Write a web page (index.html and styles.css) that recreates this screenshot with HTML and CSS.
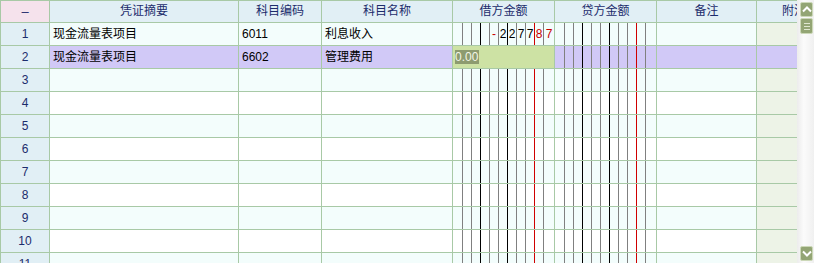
FILE: index.html
```html
<!DOCTYPE html>
<html lang="zh-CN">
<head>
  <meta charset="UTF-8">
  <title>凭证录入</title>
  <link rel="stylesheet" href="styles.css">
</head>
<body>
  <div class="window">
    <div class="grid-view">
      <div class="grid" id="grid">
        <div class="hd hd-corner">–</div>
        <div class="hd">凭证摘要</div>
        <div class="hd">科目编码</div>
        <div class="hd">科目名称</div>
        <div class="hd">借方金额</div>
        <div class="hd">贷方金额</div>
        <div class="hd">备注</div>
        <div class="hd hd-left">附注</div>
        <!-- 凭证分录行由脚本生成 -->
      </div>
    </div>

    <div class="scrollbar">
      <div class="sb-btn">
        <svg width="10" height="7" viewBox="0 0 10 7"><path d="M1 5.5 L5 1.5 L9 5.5" fill="none" stroke="#fff" stroke-width="2"/></svg>
      </div>
      <div class="sb-thumb"><span></span><span></span><span></span></div>
      <div class="sb-track"></div>
      <div class="sb-btn">
        <svg width="10" height="7" viewBox="0 0 10 7"><path d="M1 1.5 L5 5.5 L9 1.5" fill="none" stroke="#fff" stroke-width="2"/></svg>
      </div>
    </div>
  </div>

  <script>
    // 分录数据
    const entries = [
      { summary: '现金流量表项目', code: '6011', name: '利息收入', debit: '-227787' },
      { summary: '现金流量表项目', code: '6602', name: '管理费用', editing: true }
    ];

    // 金额栏：11 个数位格，千位黑线，元角分之间红线
    function amountCell(value) {
      const chars = (value || '').padStart(11, ' ').split('');
      let html = '<div class="cell amt">';
      chars.forEach((ch, i) => {
        let cls = '';
        if (i === 3 || i === 6) cls = 'thousand';
        if (i === 9) cls = 'point';
        if (i >= 9 || ch === '-') cls += ' red';
        html += `<i class="${cls}">${ch.trim()}</i>`;
      });
      return html + '</div>';
    }

    function buildRows() {
      const grid = document.getElementById('grid');
      let html = '';
      for (let n = 1; n <= 12; n++) {
        const e = entries[n - 1] || {};
        let rowClass = n % 2 ? 'row odd' : 'row even';
        if (e.editing) rowClass = 'row selected';

        html += `
          <div class="${rowClass}">
            <div class="cell num">${n}</div>
            <div class="cell">${e.summary || ''}</div>
            <div class="cell">${e.code || ''}</div>
            <div class="cell">${e.name || ''}</div>
            ${e.editing ? '<div class="cell editor"><span class="edit-box">0.00</span></div>' : amountCell(e.debit)}
            ${amountCell(e.credit)}
            <div class="cell"></div>
            <div class="cell extra"></div>
          </div>
        `;
      }
      grid.insertAdjacentHTML('beforeend', html);
    }

    buildRows();
  </script>
</body>
</html>
```

FILE: styles.css
```css
html, body {
  margin: 0;
  padding: 0;
  overflow: hidden;
  background: #fff;
  font-family: "Liberation Sans", "Noto Sans CJK SC", sans-serif;
  font-size: 12px;
}

.window {
  display: flex;
  width: 814px;
  height: 263px;
}

.grid-view {
  flex: 1;
  overflow: hidden;
}

.grid {
  display: grid;
  grid-template-columns: 48px 188px 82px 130px 101px 101px 99px 100px;
  grid-template-rows: 21px;
  grid-auto-rows: 22px;
  gap: 1px;
  padding: 1px 0 0 1px;
  width: max-content;
  background: #a8c9a6;
}

.hd {
  background: #e1eff5;
  color: #1c2c6c;
  text-align: center;
  line-height: 21px;
  white-space: nowrap;
  overflow: hidden;
}

.hd-corner {
  background: #f5e2ec;
  font-size: 13px;
}

.hd-left {
  text-align: left;
  padding-left: 25px;
}

.row {
  display: contents;
}

.cell {
  line-height: 22px;
  padding: 0 3px;
  color: #000;
  white-space: nowrap;
  overflow: hidden;
}

.row.odd > .cell {
  background: #f3fdfc;
}

.row.even > .cell {
  background: #fff;
}

.row.selected > .cell {
  background: #d1c9f7;
}

.row > .cell.num {
  background: #e1eff5;
  color: #1c2c6c;
  text-align: center;
  padding: 0;
}

.row > .cell.extra {
  background: #edf3e7;
}

.row.selected > .cell.extra {
  background: #d1c9f7;
}

/* 金额数位格 */
.amt {
  display: flex;
  padding: 0;
}

.amt i {
  flex: none;
  width: 9px;
  box-sizing: border-box;
  border-left: 1px solid #808080;
  font-style: normal;
  text-align: center;
  color: #000;
}

.amt i:first-child {
  border-left: 0;
}

.amt i:last-child {
  flex: 1;
}

.amt i.thousand {
  border-left-color: #000;
}

.amt i.point {
  border-left-color: #d00000;
}

.amt i.red {
  color: #c80000;
}

.row.selected > .cell.editor {
  display: flex;
  align-items: center;
  padding: 0 0 0 2px;
  background: #cde2a4;
}

.edit-box {
  background: #8d9b6f;
  color: #f2f6e6;
  line-height: 14px;
  padding: 0 1px 0 0;
}

/* 滚动条 */
.scrollbar {
  width: 17px;
  box-sizing: border-box;
  padding: 2px 1px 2px 3px;
  display: flex;
  flex-direction: column;
  background: linear-gradient(to right, #ececec, #fbfbfb 40%, #f0f0f0);
}

.sb-btn,
.sb-thumb {
  height: 15px;
  box-sizing: border-box;
  border: 1px solid #ccd8b8;
  border-radius: 2px;
  background: #93a574;
  display: flex;
  align-items: center;
  justify-content: center;
}

.sb-thumb {
  margin-top: 1px;
  height: 16px;
  flex-direction: column;
  gap: 2px;
}

.sb-thumb span {
  display: block;
  width: 6px;
  height: 1px;
  background: #dfe7d0;
}

.sb-track {
  flex: 1;
}
```
